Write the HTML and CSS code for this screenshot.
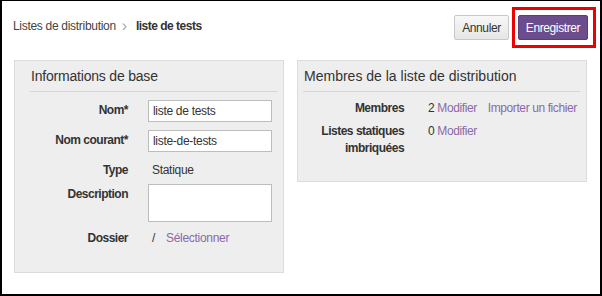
FILE: index.html
```html
<!DOCTYPE html>
<html lang="fr">
<head>
    <meta charset="UTF-8">
    <title>liste de tests</title>
    <link rel="stylesheet" href="styles.css">
</head>
<body>
    <div class="frame">
        <div class="header">
            <div class="breadcrumb">
                <a class="crumb" href="#">Listes de distribution</a>
                <span class="sep">&#8250;</span>
                <span class="current">liste de tests</span>
            </div>
            <div class="actions">
                <button class="btn btn-cancel">Annuler</button>
                <span class="highlight"><button class="btn btn-primary">Enregistrer</button></span>
            </div>
        </div>
        <div class="panels">
            <div class="panel panel-info">
                <h2 class="panel-title">Informations de base</h2>
                <div class="row">
                    <label class="label">Nom*</label>
                    <input class="field" type="text" value="liste de tests">
                </div>
                <div class="row">
                    <label class="label">Nom courant*</label>
                    <input class="field" type="text" value="liste-de-tests">
                </div>
                <div class="row">
                    <label class="label">Type</label>
                    <span class="value">Statique</span>
                </div>
                <div class="row row-desc">
                    <label class="label">Description</label>
                    <textarea class="field area"></textarea>
                </div>
                <div class="row row-folder">
                    <label class="label">Dossier</label>
                    <span class="value"><span class="slash">/</span><a class="link" href="#">Sélectionner</a></span>
                </div>
            </div>
            <div class="panel panel-members">
                <h2 class="panel-title">Membres de la liste de distribution</h2>
                <div class="mrow">
                    <span class="mlabel">Membres</span>
                    <span class="mvalue">2 <a class="link" href="#">Modifier</a><a class="link import" href="#">Importer un fichier</a></span>
                </div>
                <div class="mrow">
                    <span class="mlabel">Listes statiques imbriquées</span>
                    <span class="mvalue">0 <a class="link" href="#">Modifier</a></span>
                </div>
            </div>
        </div>
    </div>
</body>
</html>
```

FILE: styles.css
```css
body {
    margin: 0;
    font-family: "Liberation Sans", Arial, sans-serif;
    font-size: 12px;
    color: #333;
    background: white;
}
.frame {
    box-sizing: border-box;
    height: 296px;
    border: 2px solid #000;
    border-top-width: 1px;
    padding: 0 13px 0 11px;
}
.header {
    display: flex;
    justify-content: space-between;
    align-items: flex-start;
    height: 59px;
}
.breadcrumb {
    padding: 15px 0 0 0;
    font-size: 12px;
    letter-spacing: -0.3px;
}
.crumb {
    color: #444;
    text-decoration: none;
}
.sep {
    color: #aaa;
    font-size: 16px;
    margin: 0 6px 0 3px;
    position: relative;
    top: 1px;
}
.current {
    font-weight: bold;
    color: #333;
    letter-spacing: -0.5px;
}
.actions {
    display: flex;
    align-items: center;
    gap: 3px;
    padding-top: 6px;
    margin-right: -9px;
}
.btn {
    font-family: inherit;
    font-size: 12px;
    height: 25px;
    padding: 0 6px;
    border: 1px solid #c8c8c8;
    border-radius: 2px;
    background: linear-gradient(#f7f7f7, #e6e6e6);
    color: #333;
    letter-spacing: -0.4px;
}
.btn-cancel {
    width: 55px;
}
.highlight {
    display: flex;
    border: 3px solid #ee0000;
    padding: 5px 5px 5px 3px;
}
.btn-primary {
    width: 70px;
    background: #6b4c8c;
    border-color: #5a3d78;
    color: #fff;
}
.panels {
    display: flex;
    align-items: flex-start;
    gap: 13px;
    padding-left: 1px;
}
.panel {
    box-sizing: border-box;
    background: #eeeeee;
    border: 1px solid #dcdcdc;
}
.panel-info {
    width: 271px;
    height: 213px;
    padding: 5px 5px 0 15px;
}
.panel-members {
    width: 291px;
    height: 122px;
    padding: 5px 6px 0 5px;
}
.panel-title {
    margin: 0;
    font-size: 14px;
    font-weight: normal;
    color: #333;
    padding: 2px 0 7px 1px;
    border-bottom: 1px solid #d6d6d6;
    letter-spacing: -0.2px;
}
.panel-members .panel-title {
    letter-spacing: 0;
}
.row {
    display: flex;
    align-items: flex-start;
    margin-top: 8px;
}
.row-desc {
    margin-top: 6px;
}
.row-folder {
    margin-top: 6px;
}
.label {
    width: 98px;
    text-align: right;
    font-weight: bold;
    padding-top: 3px;
    letter-spacing: -0.5px;
    flex: none;
}
.field {
    box-sizing: border-box;
    margin-left: 20px;
    width: 124px;
    height: 22px;
    border: 1px solid #bdbdbd;
    background: #fff;
    font-family: inherit;
    font-size: 12px;
    color: #333;
    padding: 0 4px;
    letter-spacing: -0.3px;
}
.area {
    height: 38px;
    resize: none;
}
.value {
    margin-left: 24px;
    padding-top: 3px;
    letter-spacing: -0.3px;
    line-height: 15px;
}
.slash {
    margin-right: 11px;
}
.link {
    color: #8a6aa8;
    text-decoration: none;
}
.mrow {
    display: flex;
    margin-top: 8px;
    line-height: 17px;
}
.mrow + .mrow {
    margin-top: 6px;
}
.mlabel {
    width: 96px;
    margin-left: 5px;
    text-align: right;
    font-weight: bold;
    letter-spacing: -0.5px;
    flex: none;
}
.mvalue {
    margin-left: 24px;
    letter-spacing: -0.4px;
}
.import {
    margin-left: 11px;
}
```
